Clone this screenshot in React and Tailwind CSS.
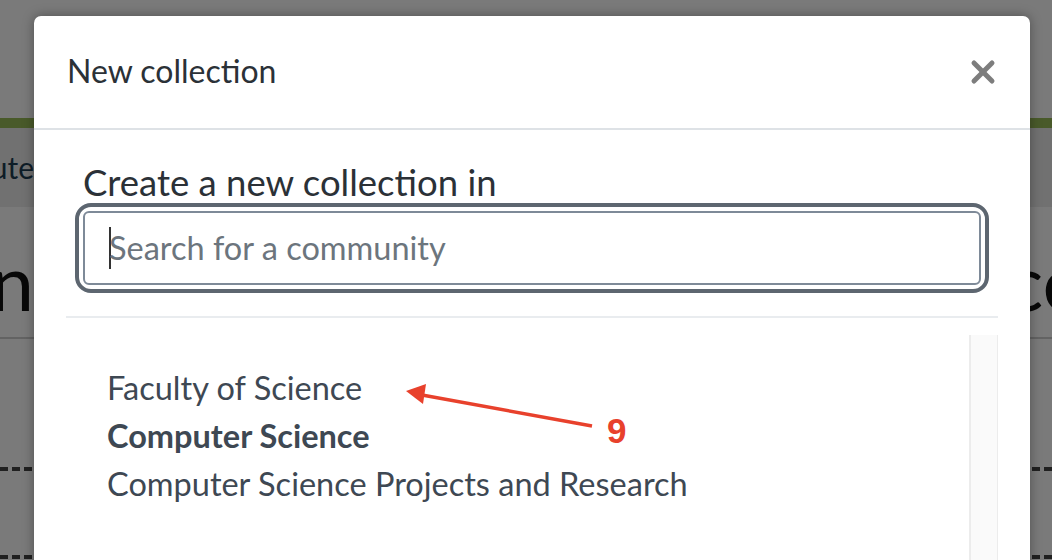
import { X } from "lucide-react";

const font = { fontFamily: "Lato, 'Open Sans', sans-serif" };

function Page() {
  return (
    <div className="h-[560px] bg-white overflow-hidden">
      <div className="h-[118px]" />
      <div className="h-[10px] bg-[#9abd58]" />
      <div className="h-[79px] bg-[#ececec] flex items-center">
        <div className="w-[34px] shrink-0 overflow-hidden flex justify-end">
          <span className="text-[30px] text-[#1f3d52] whitespace-nowrap">Institute</span>
        </div>
      </div>
      <div className="h-[132px] flex items-center border-b-2 border-[#cfcfcf] pt-[18px]">
        <div className="w-[34px] shrink-0 overflow-hidden flex justify-end">
          <span className="text-[78px] text-[#111] whitespace-nowrap">Collection</span>
        </div>
        <div className="w-[972px] shrink-0" />
        <span className="shrink-0 text-[78px] text-[#111] whitespace-nowrap">ces</span>
      </div>
      <div className="h-[128px]" />
      <div className="border-t-[4px] border-dashed border-[#444]" />
      <div className="h-[84px]" />
      <div className="border-t-[4px] border-dashed border-[#444]" />
    </div>
  );
}

function Modal() {
  return (
    <div className="absolute left-[34px] top-[16px] w-[996px] h-[600px] bg-white rounded-[7px] shadow-[0_0_12px_rgba(0,0,0,0.35)]">
      <div className="h-[114px] flex items-center justify-between pl-[33px] pr-[29px] border-b-2 border-[#dee2e6]">
        <h2 className="text-[32px] text-[#2b3137] -mt-[2px]">New collection</h2>
        <X className="w-[36px] h-[36px] text-[#7d7d7d] -mt-[1px]" strokeWidth={3.3} />
      </div>
      <div className="px-[32px]">
        <div className="px-[17px] pt-[30px]">
          <label className="block text-[36.5px] leading-[44px] text-[#2b3137]">Create a new collection in</label>
          <div className="mt-[7px] outline-[4px] outline-solid outline-[#5d6670] outline-offset-[4px] rounded-[8px]">
            <div className="h-[74px] border-2 border-[#7e8a98] rounded-[6px] flex items-center pl-[24px]">
              <span className="w-[2px] h-[42px] bg-[#333] -mr-[2px]" />
              <span className="text-[32.5px] text-[#6c757d]">Search for a community</span>
            </div>
          </div>
        </div>
        <div className="mt-[31px] border-t-2 border-[#e9ecef]" />
        <div className="flex pt-[17px]">
          <ul className="flex-1 pl-[41px] pt-[29px] text-[32.5px] leading-[48px] text-[#3e4853]">
            <li>Faculty of Science</li>
            <li className="font-bold">Computer Science</li>
            <li>Computer Science Projects and Research</li>
          </ul>
          <div className="w-[29px] h-[260px] bg-[#fafafa] border-l-2 border-r border-[#ececec]" />
        </div>
      </div>
    </div>
  );
}

export default function App() {
  return (
    <div className="relative w-[1052px] h-[560px] overflow-hidden" style={font}>
      <Page />
      <div className="absolute inset-0 bg-black/[0.52]" />
      <Modal />
      <svg className="absolute left-0 top-0" width="1052" height="560">
        <line x1="592" y1="426" x2="422" y2="395" stroke="#e8412c" strokeWidth="3.5" />
        <polygon points="406,391 426,384 423,404" fill="#e8412c" />
        <text x="607" y="443" fill="#e8412c" fontSize="35" fontWeight="bold" fontFamily="'Liberation Sans', Arial, sans-serif">9</text>
      </svg>
    </div>
  );
}
